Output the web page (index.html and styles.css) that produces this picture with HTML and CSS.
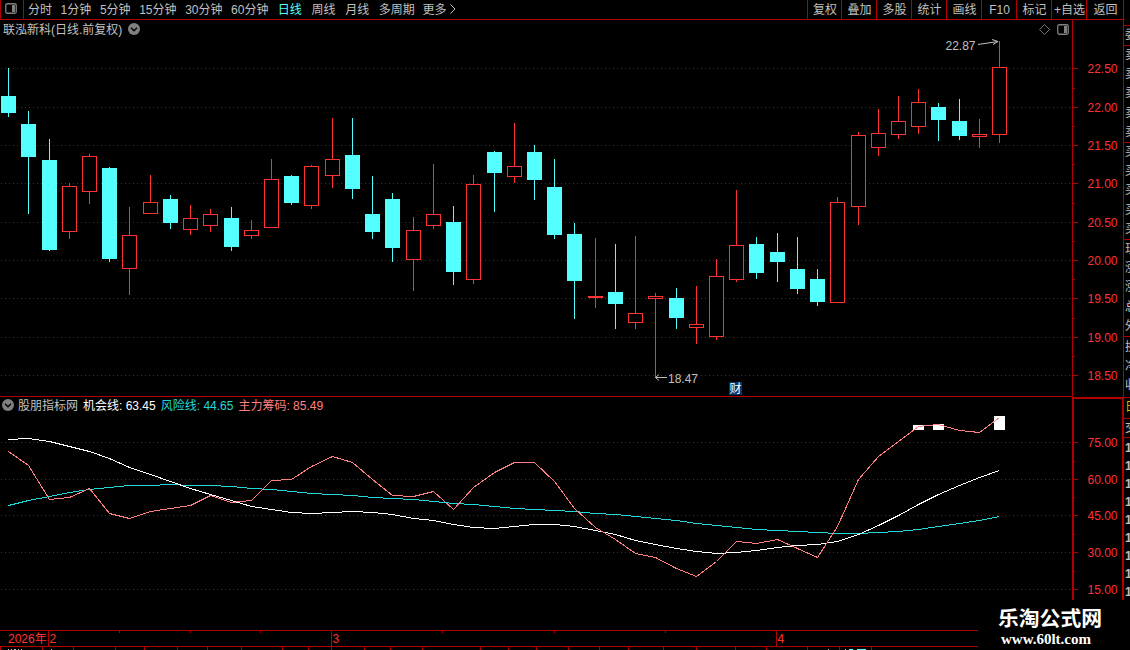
FILE: index.html
```
<!DOCTYPE html>
<html lang="zh-CN">
<head>
  <meta charset="UTF-8">
  <meta name="viewport" content="width=device-width, initial-scale=1.0">
  <title>联泓新科 日线</title>
  <link rel="stylesheet" href="styles.css">
</head>
<body>

<div class="terminal">
  <div class="main">

    <!-- Toolbar -->
    <header class="toolbar">
      <button class="panel-btn">
        <svg width="12" height="11" viewBox="0 0 12 11">
          <rect x="0.75" y="0.75" width="10.5" height="9.5" rx="1.5" fill="none" stroke="#808080" stroke-width="1.3"/>
          <rect x="7" y="2" width="3" height="7" fill="#808080"/>
        </svg>
      </button>
      <nav class="periods">
        <a>分时</a>
        <a>1分钟</a>
        <a>5分钟</a>
        <a>15分钟</a>
        <a>30分钟</a>
        <a>60分钟</a>
        <a class="wide active">日线</a>
        <a class="wide">周线</a>
        <a class="wide">月线</a>
        <a>多周期</a>
        <a class="more">更多
          <svg width="6" height="10" viewBox="0 0 6 10"><path d="M0.5 0.5L5 5L0.5 9.5" fill="none" stroke="#c0c0c0"/></svg>
        </a>
      </nav>
      <div class="tools">
        <a class="narrow">复权</a>
        <a>叠加</a>
        <a>多股</a>
        <a>统计</a>
        <a>画线</a>
        <a>F10</a>
        <a>标记</a>
        <a>+自选</a>
        <a class="last">返回</a>
      </div>
    </header>

    <!-- K line pane -->
    <section class="pane price-pane">
      <svg id="priceChart" class="chart" width="1124" height="377"></svg>
      <div class="pane-head">
        <span class="stock">联泓新科(日线.前复权)</span>
        <svg class="drop" width="12" height="12" viewBox="0 0 12 12">
          <circle cx="6" cy="6" r="6" fill="#808080"/>
          <path d="M3 4.7L6 7.7L9 4.7" fill="none" stroke="#000" stroke-width="1.4"/>
        </svg>
        <div class="pane-icons">
          <svg width="11" height="11" viewBox="0 0 11 11"><path d="M5.5 0.5L10.5 5.5L5.5 10.5L0.5 5.5Z" fill="none" stroke="#808080" stroke-width="0.9"/></svg>
          <svg width="12" height="11" viewBox="0 0 12 11">
            <rect x="0.75" y="0.75" width="10.5" height="9.5" rx="1.5" fill="none" stroke="#808080" stroke-width="1.3"/>
            <rect x="7" y="2" width="3" height="7" fill="#808080"/>
          </svg>
        </div>
      </div>
      <span class="news-tag">财</span>
    </section>

    <!-- Indicator pane -->
    <section class="pane ind-pane">
      <svg id="indChart" class="chart" width="1124" height="233"></svg>
      <div class="ind-head">
        <svg class="drop" width="12" height="12" viewBox="0 0 12 12">
          <circle cx="6" cy="6" r="6" fill="#808080"/>
          <path d="M3 4.7L6 7.7L9 4.7" fill="none" stroke="#000" stroke-width="1.4"/>
        </svg>
        <span>股朋指标网</span>
        <span class="chance">机会线: 63.45</span>
        <span class="risk">风险线: 44.65</span>
        <span class="chips">主力筹码: 85.49</span>
      </div>
    </section>

    <!-- Date axis and bottom tabs -->
    <svg id="dateAxis" class="chart" width="978" height="20"></svg>
  </div>

  <!-- Quote list, cut by the window edge -->
  <aside class="quotes">
    <div class="q-block q-top"></div>
    <div class="q-block q-ratio"><i>委</i></div>
    <div class="q-block q-five"><i>卖</i><i>卖</i><i>卖</i><i>卖</i><i>卖</i></div>
    <div class="q-block q-five"><i>买</i><i>买</i><i>买</i><i>买</i><i>买</i></div>
    <div class="q-block q-five"><i>现</i><i>涨</i><i>涨</i><i>总</i><i>外</i></div>
    <div class="q-block q-three"><i>换</i><i>净</i><i>收</i></div>
    <div class="q-block q-tab"><i>日</i></div>
    <div class="q-block q-deal"><i>交</i></div>
    <div class="q-ticks"><i>1</i><i>1</i><i>1</i><i>1</i><i>1</i><i>1</i><i>1</i><i>1</i><i>1</i></div>
  </aside>

  <div class="watermark">
    <strong>乐淘公式网</strong>
    <em>www.60lt.com</em>
  </div>
</div>

<script src="chart.js"></script>
</body>
</html>
```
FILE: styles.css
```
* {
  box-sizing: border-box;
}

body {
  margin: 0;
  background: #000;
  color: #c0c0c0;
  font-family: "Liberation Sans", "Noto Sans CJK SC", sans-serif;
  font-size: 12px;
  line-height: 14px;
  overflow: hidden;
}

.terminal {
  position: relative;
  display: flex;
  width: 1130px;
  height: 650px;
  overflow: hidden;
}

.main {
  width: 1124px;
  flex: none;
}

.chart {
  display: block;
}

/* --- Toolbar --- */
.toolbar {
  display: flex;
  height: 20px;
  border-bottom: 1px solid #b00000;
  border-right: 1px solid #b00000;
}

.panel-btn {
  display: flex;
  align-items: flex-start;
  width: 24px;
  padding: 3px 0 0 4px;
  background: none;
  border: solid #b00000;
  border-width: 0 1px;
}

.periods {
  display: flex;
  flex: 1;
  gap: 8.6px;
  padding: 3px 0 0 4px;
  white-space: nowrap;
}

.periods .wide {
  margin-right: 1.1px;
}

.periods .active {
  margin-left: 0.7px;
  color: #54ffff;
}

.more {
  display: flex;
  gap: 4px;
  margin-left: -1px;
}

.more svg {
  margin-top: 1px;
}

.tools {
  display: flex;
}

.tools a {
  width: 35px;
  padding: 3px 0 0 1px;
  border-left: 1px solid #b00000;
  text-align: center;
  white-space: nowrap;
}

.tools .narrow {
  width: 34px;
}

.tools .last {
  width: 37px;
}

/* --- Panes --- */
.pane {
  position: relative;
}

.price-pane {
  height: 377px;
}

.ind-pane {
  height: 233px;
}

.pane-head,
.ind-head {
  position: absolute;
  top: 0;
  left: 0;
  display: flex;
}

.pane-head {
  width: 1072px;
  padding: 3px 3px 0;
  gap: 6px;
}

.pane-icons {
  display: flex;
  gap: 7px;
  margin-left: auto;
  padding-top: 1px;
}

.ind-head {
  padding: 2px 2px 0;
  gap: 5px;
}

.ind-head .drop {
  margin-right: -1px;
}

.chance { color: #fff; }
.risk { color: #20d8d8; }
.chips { color: #ff8080; }

.news-tag {
  position: absolute;
  left: 729px;
  top: 362px;
  width: 13px;
  height: 13px;
  background: #00366c;
  color: #fff;
  line-height: 14px;
  text-align: center;
}

.axis-text { fill: #ff3232; }
.mark-text { fill: #c0c0c0; }

/* --- Quote list --- */
.quotes {
  width: 6px;
  height: 600px;
  flex: none;
  overflow: hidden;
}

.quotes i {
  display: block;
  font-style: normal;
  width: 14px;
  padding-left: 1px;
  height: 19px;
  line-height: 19px;
}

.q-block {
  border-bottom: 1px solid #b00000;
  overflow: hidden;
}

.q-top { height: 26px; }
.q-ratio { height: 20px; }
.q-five { height: 97px; }
.q-five i { height: 19.2px; }
.q-three { height: 61px; padding-top: 1px; }
.q-tab { height: 21px; color: #c0c000; }
.q-deal { height: 19px; }
.q-ticks { font-weight: bold; }
.quotes .q-ticks i { height: 18px; line-height: 20px; }

/* --- Watermark --- */
.watermark {
  position: absolute;
  left: 978px;
  top: 600px;
  width: 152px;
  height: 50px;
  background: #000;
  color: #fff;
  padding: 7px 0 0 20px;
}

.watermark strong {
  display: block;
  font-size: 20.8px;
  line-height: 24px;
}

.watermark em {
  display: block;
  padding-left: 3px;
  font: bold 15px/17px "Liberation Serif", serif;
}
```
FILE: chart.js
```
const NS = "http://www.w3.org/2000/svg";
const RED = "#b00000";
const UP = "#ff3232";
const DOWN = "#54ffff";

// [x, high, body top, body bottom, low, up]
const candles = [
  [8,68,96,113,117,0],[28,111,124,157,214,0],[49,139,160,250,251,0],[69,183,186,232,239,1],
  [89,154,156,192,204,1],[109,167,168,259,262,0],[129,207,235,269,295,1],[150,175,202,214,214,1],
  [170,195,199,223,229,0],[190,205,218,230,235,1],[210,209,214,226,232,1],[231,207,218,247,251,0],
  [251,220,230,236,239,1],[271,159,179,228,228,1],[291,175,176,203,205,0],[311,165,166,206,209,1],
  [332,118,159,176,188,1],[352,118,155,189,199,0],[372,176,214,232,239,0],[392,193,199,248,262,0],
  [413,217,230,260,291,1],[433,164,214,226,229,1],[453,206,222,272,285,0],[473,175,184,280,284,1],
  [494,151,152,173,212,0],[514,123,166,177,183,1],[534,145,152,180,200,0],[554,159,187,235,239,0],
  [574,223,234,281,319,0],[595,238,296,298,308,1],[615,244,292,304,329,0],[635,236,313,323,329,1],
  [655,293,296,299,377,1],[676,288,298,318,329,0],[696,286,324,328,344,1],[716,259,276,337,340,1],
  [736,190,245,280,282,1],[756,237,244,273,279,0],[777,233,252,262,282,0],[797,237,269,289,294,0],
  [817,269,279,302,306,0],[837,197,202,303,303,1],[858,132,135,207,225,1],[878,109,133,148,156,1],
  [898,96,121,135,139,1],[918,89,102,127,134,1],[938,103,107,120,141,0],[959,99,121,136,140,0],
  [979,119,134,137,148,1],[999,41,67,135,143,1]
];

const chance = [439,438,441,446,451,458,467,474,481,488,494,500,506,509,512,513,512,511,512,514,518,520,524,527,528,
  526,524,524,526,530,534,540,544,548,551,553,552,550,547,545,544,541,534,525,515,504,494,485,477,470];
const risk = [505,500,496,492,489,487,485,485,484,485,485,486,488,489,491,493,494,495,497,498,499,501,503,504,506,
  508,509,510,511,513,514,516,518,520,523,525,527,529,530,531,532,533,533,532,531,529,526,523,520,516];
const chips = [451,465,499,497,488,513,518,511,508,505,495,502,500,480,479,466,456,462,479,495,496,491,509,487,472,
  462,462,481,508,527,539,553,557,568,576,561,541,543,539,548,557,526,479,456,441,426,424,430,432,417];

function add(svg, tag, attrs, text) {
  const el = document.createElementNS(NS, tag);
  for (const k in attrs) el.setAttribute(k, attrs[k]);
  if (text) el.textContent = text;
  svg.appendChild(el);
  return el;
}

function rect(svg, x, y, w, h, fill) {
  add(svg, "rect", { x, y, width: w, height: h, fill, "shape-rendering": "crispEdges" });
}

function grid(svg, rows, minor, top) {
  rows.forEach(([y, label]) => {
    add(svg, "line", { x1: 1, x2: 1070, y1: y - top + 0.5, y2: y - top + 0.5, stroke: RED, "stroke-dasharray": "1 3", "shape-rendering": "crispEdges" });
    rect(svg, 1073, y - top, 5, 1, RED);
    add(svg, "text", { x: 1087.5, y: y - top + 5, class: "axis-text" }, label);
  });
  minor.forEach(y => rect(svg, 1073, y - top, 2, 1, RED));
}

// K line
function drawPrice() {
  const svg = document.getElementById("priceChart");
  const top = 20;
  grid(svg, [[68,"22.50"],[107,"22.00"],[145,"21.50"],[183,"21.00"],[222,"20.50"],[260,"20.00"],[298,"19.50"],[337,"19.00"],[375,"18.50"]],
    [88,126,164,203,241,279,318,356], top);
  rect(svg, 1072, 0, 1, 377, RED);
  rect(svg, 1123, 0, 1, 377, RED);
  rect(svg, 0, 376, 1073, 1, RED);

  candles.forEach(([x, high, t, b, low, up]) => {
    const color = up ? UP : DOWN;
    rect(svg, x, high - top, 1, t - high, color);
    rect(svg, x, b - top, 1, low - b, color);
    rect(svg, x - 7, t - top, 15, b - t, color);
    if (up && b - t > 2) rect(svg, x - 6, t - top + 1, 13, b - t - 2, "#000");
  });

  add(svg, "text", { x: 945.5, y: 30, class: "mark-text" }, "22.87");
  add(svg, "path", { d: "M978 24.5L998 21.5M992 19.5L998 21.5L993 24.5", fill: "none", stroke: "#c0c0c0" });
  add(svg, "text", { x: 668, y: 363, class: "mark-text" }, "18.47");
  add(svg, "path", { d: "M667 357.5H655.5M659 354.5L655.5 357.5L659 360.5", fill: "none", stroke: "#c0c0c0" });
}

// Indicator
function drawIndicator() {
  const svg = document.getElementById("indChart");
  const top = 397;
  grid(svg, [[442,"75.00"],[479,"60.00"],[515,"45.00"],[552,"30.00"],[589,"15.00"]], [461,497,534,571], top);
  rect(svg, 1072, 0, 2, 203, RED);
  rect(svg, 1122, 0, 2, 203, RED);
  rect(svg, 1072, 0, 51, 2, RED);

  rect(svg, 913, 28, 11, 5, "#fff");
  rect(svg, 933, 27, 11, 6, "#fff");
  rect(svg, 994, 19, 11, 14, "#fff");

  [[risk, "#20d8d8"], [chance, "#fff"], [chips, "#ff8080"]].forEach(([data, stroke]) => {
    const points = data.map((y, i) => (candles[i][0] + 0.5) + "," + (y - top + 0.5)).join(" ");
    add(svg, "polyline", { points, fill: "none", stroke, "shape-rendering": "crispEdges" });
  });
}

// Dates
function drawDates() {
  const svg = document.getElementById("dateAxis");
  rect(svg, 0, 0, 978, 1, RED);
  rect(svg, 0, 16, 978, 1, RED);
  [48, 331, 776].forEach(x => rect(svg, x, 1, 1, 15, RED));
  [119, 190, 260, 442, 554, 665].forEach(x => rect(svg, x, 1, 1, 2, RED));
  [0,42,73,115,144,177,207,241,282,308,331,364,390,422,480,508,536,568,599,628,663,696,735,766,807,839,871]
    .forEach(x => rect(svg, x, 17, 1, 3, RED));
  add(svg, "text", { x: 8, y: 13, class: "axis-text" }, "2026年");
  [[49.5, "2"], [332.5, "3"], [777.5, "4"]].forEach(([x, t]) => add(svg, "text", { x, y: 13, class: "axis-text" }, t));
  // tops of the tab captions under the axis
  [[8,1],[11,1],[14,2],[18,1],[21,1],[51,1],[828,1]].forEach(([x, w]) => rect(svg, x, 19, w, 1, "#c0c0c0"));
  [[845,1],[849,4],[857,9]].forEach(([x, w]) => rect(svg, x, 19, w, 1, DOWN));
}

drawPrice();
drawIndicator();
drawDates();
```
